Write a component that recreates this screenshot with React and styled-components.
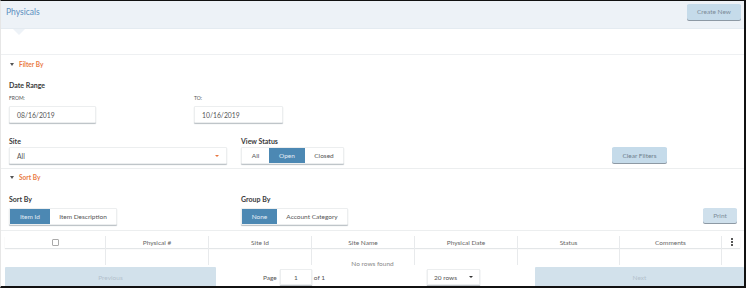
import React from "react";
import styled, { createGlobalStyle } from "styled-components";

const Global = createGlobalStyle`
  html, body { margin: 0; padding: 0; background: #fff; }
  body { font-family: Lato, "Open Sans", sans-serif; color: #333; }
  * { box-sizing: border-box; }
`;

const Frame = styled.div`
  width: 746px;
  height: 288px;
  border-top: 1px solid #111;
  border-right: 2px solid #111;
  border-bottom: 2px solid #111;
  border-left: 1px solid #e6e6e6;
  overflow: hidden;
  display: flex;
  flex-direction: column;
  background: #fff;
`;

const Header = styled.div`
  position: relative;
  height: 28px;
  flex: none;
  background: #edf2f7;
  border-bottom: 1px solid #e4ebf1;
  display: flex;
  align-items: center;
  justify-content: space-between;
  padding: 0 3px 0 5px;
  &::after {
    content: "";
    position: absolute;
    left: 12px;
    top: 28px;
    border-left: 6px solid transparent;
    border-right: 6px solid transparent;
    border-top: 6px solid #edf2f7;
  }
`;

const Title = styled.div`
  font-size: 8.5px;
  color: #5a8fbf;
  margin-top: -6px;
`;

const SoftButton = styled.button`
  font-family: inherit;
  font-size: ${(p) => p.$size || 6.5}px;
  color: ${(p) => p.$fg || "#7d8c99"};
  background: ${(p) => p.$bg || "#c5dbea"};
  border: none;
  border-radius: 2px;
  box-shadow: 0 1px 0 #8d99a4;
  width: ${(p) => p.$w}px;
  height: ${(p) => p.$h || 16}px;
  padding: 0;
  cursor: pointer;
`;

const Gap = styled.div`
  height: 25px;
  flex: none;
`;

const Panel = styled.div`
  border-top: 1px solid #eef0f2;
  display: flex;
  flex-direction: column;
  padding: 0 0 0 8px;
  flex: none;
`;

const Toggle = styled.div`
  display: flex;
  align-items: center;
  gap: 5px;
  height: ${(p) => p.$h || 18}px;
  font-size: 6.5px;
  font-weight: 700;
  color: #ea7a44;
  padding-left: 1px;
  &::before {
    content: "";
    border-left: 2.5px solid transparent;
    border-right: 2.5px solid transparent;
    border-top: 3px solid #555;
  }
`;

const Label = styled.div`
  font-size: 7px;
  font-weight: 700;
  color: #3a3a3a;
  height: 10px;
  line-height: 10px;
  margin-top: ${(p) => p.$mt || 0}px;
`;

const Tiny = styled.div`
  font-size: 5px;
  color: #555;
  height: 8px;
  line-height: 8px;
  margin-top: ${(p) => p.$mt || 0}px;
`;

const Row = styled.div`
  display: flex;
  align-items: ${(p) => p.$align || "flex-start"};
  margin-top: ${(p) => p.$mt || 0}px;
`;

const Col = styled.div`
  display: flex;
  flex-direction: column;
  width: ${(p) => (p.$w ? p.$w + "px" : "auto")};
  flex: none;
`;

const Input = styled.div`
  width: ${(p) => p.$w}px;
  height: 17px;
  margin-top: ${(p) => p.$mt || 0}px;
  background: #fff;
  border: 1px solid #eceeef;
  box-shadow: 0 1px 1px #b9bfc4;
  border-radius: 1px;
  display: flex;
  align-items: center;
  justify-content: space-between;
  padding: 0 7px;
  font-size: 6.8px;
  color: #555;
`;

const Caret = styled.span`
  width: 0;
  height: 0;
  border-left: 2px solid transparent;
  border-right: 2px solid transparent;
  border-top: 2px solid ${(p) => p.$c || "#e9773f"};
`;

const Segs = styled.div`
  display: flex;
  height: 17px;
  margin-top: ${(p) => p.$mt || 0}px;
  border: 1px solid #eceeef;
  box-shadow: 0 1px 1px #b9bfc4;
  border-radius: 1px;
  background: #fff;
  align-self: flex-start;
`;

const Seg = styled.div`
  width: ${(p) => p.$w}px;
  display: flex;
  align-items: center;
  justify-content: center;
  font-size: 6.5px;
  color: ${(p) => (p.$on ? "#e3edf5" : "#555")};
  background: ${(p) => (p.$on ? "#4c88b3" : "#fff")};
`;

const Sep = styled.div`
  height: 1px;
  background: #eceeef;
  margin: ${(p) => p.$m || "0"};
`;

const Table = styled.div`
  margin: 5px 4px 0 4px;
  display: flex;
  flex-direction: column;
  flex: none;
`;

const TRow = styled.div`
  display: grid;
  grid-template-columns: 100px 103px 103px 103px 103px 102px 102px 20px;
  height: ${(p) => p.$h}px;
  box-shadow: ${(p) => (p.$head ? "0 1px 1px #e3e6e8" : "none")};
`;

const Cell = styled.div`
  border-left: 1px solid ${(p) => (p.$first ? "transparent" : "#e8eaec")};
  display: flex;
  align-items: center;
  justify-content: center;
  font-size: 6.5px;
  color: #666;
`;

const Check = styled.span`
  width: 7px;
  height: 7px;
  border: 1px solid #aaa;
  border-radius: 1px;
  background: #fff;
`;

const Kebab = styled.span`
  display: flex;
  flex-direction: column;
  gap: 1px;
  span {
    width: 2px;
    height: 2px;
    background: #222;
    border-radius: 1px;
  }
`;

const Body = styled.div`
  position: relative;
`;

const NoRows = styled.div`
  position: absolute;
  left: 50%;
  top: 12px;
  transform: translateX(-50%);
  background: #fff;
  font-size: 6.5px;
  color: #888;
  padding: 0 14px;
  line-height: 8px;
`;

const Pager = styled.div`
  display: flex;
  align-items: center;
  height: 20px;
  margin: 2px 0 0 4px;
  flex: none;
`;

const PageBtn = styled.div`
  width: ${(p) => p.$w}px;
  height: 20px;
  background: #d2e1eb;
  border-radius: 1px;
  display: flex;
  align-items: center;
  justify-content: center;
  font-size: 6.5px;
  color: #b4c2cd;
`;

const PageInfo = styled.div`
  flex: 1;
  display: flex;
  align-items: center;
  font-size: 6.5px;
  color: #555;
  padding-left: 47px;
`;

const SmallBox = styled.div`
  width: ${(p) => p.$w}px;
  height: 16px;
  border: 1px solid #eceeef;
  box-shadow: 0 1px 1px #c3c8cc;
  display: flex;
  align-items: center;
  justify-content: ${(p) => p.$justify || "center"};
  padding: 0 6px;
  font-size: 6.5px;
  color: #555;
  margin: ${(p) => p.$m || "0"};
`;

export default function App() {
  const cols = ["Physical #", "Site Id", "Site Name", "Physical Date", "Status", "Comments"];
  return (
    <>
      <Global />
      <Frame>
        <Header>
          <Title>Physicals</Title>
          <SoftButton $w={54} $h={16} style={{ marginTop: -6 }}>Create New</SoftButton>
        </Header>
        <Gap />
        <Panel>
          <Toggle>Filter By</Toggle>
          <Label $mt={7}>Date Range</Label>
          <Row>
            <Col $w={185}>
              <Tiny $mt={4}>FROM:</Tiny>
              <Input $w={87} $mt={4}>08/16/2019</Input>
            </Col>
            <Col>
              <Tiny $mt={4}>TO:</Tiny>
              <Input $w={89} $mt={4}>10/16/2019</Input>
            </Col>
          </Row>
          <Row $align="flex-end" $mt={13}>
            <Col $w={232}>
              <Label>Site</Label>
              <Input $w={218} $mt={1}>
                <span>All</span>
                <Caret />
              </Input>
            </Col>
            <Col $w={371}>
              <Label>View Status</Label>
              <Segs $mt={1}>
                <Seg $w={27}>All</Seg>
                <Seg $w={36} $on>Open</Seg>
                <Seg $w={38}>Closed</Seg>
              </Segs>
            </Col>
            <SoftButton $w={55} $h={16} $fg="#6f7f8d" style={{ marginBottom: 1 }}>Clear Filters</SoftButton>
          </Row>
          <Sep $m="4px 0 0 -8px" />
          <Toggle $h={16}>Sort By</Toggle>
          <Row $align="flex-end" $mt={9}>
            <Col $w={232}>
              <Label>Sort By</Label>
              <Segs $mt={4}>
                <Seg $w={40} $on>Item Id</Seg>
                <Seg $w={66}>Item Description</Seg>
              </Segs>
            </Col>
            <Col $w={462}>
              <Label>Group By</Label>
              <Segs $mt={4}>
                <Seg $w={35} $on>None</Seg>
                <Seg $w={70}>Account Category</Seg>
              </Segs>
            </Col>
            <SoftButton $w={34} $h={15} $bg="#cfe0ec" $fg="#7d8e9b" style={{ marginBottom: 2 }}>Print</SoftButton>
          </Row>
          <Sep $m="5px 0 0 -8px" />
        </Panel>
        <Table>
          <TRow $h={12} $head>
            <Cell $first><Check /></Cell>
            {cols.map((c) => (
              <Cell key={c}>{c}</Cell>
            ))}
            <Cell>
              <Kebab><span /><span /><span /></Kebab>
            </Cell>
          </TRow>
          <Body>
            <TRow $h={17}>
              <Cell $first />
              {cols.map((c) => (
                <Cell key={c} />
              ))}
              <Cell />
            </TRow>
            <NoRows>No rows found</NoRows>
          </Body>
        </Table>
        <Pager>
          <PageBtn $w={211}>Previous</PageBtn>
          <PageInfo>
            <span>Page</span>
            <SmallBox $w={32} $m="0 2px 0 3px">1</SmallBox>
            <span>of 1</span>
            <SmallBox $w={53} $justify="space-between" $m="0 0 0 102px">
              <span>20 rows</span>
              <Caret $c="#333" />
            </SmallBox>
          </PageInfo>
          <PageBtn $w={209}>Next</PageBtn>
        </Pager>
      </Frame>
    </>
  );
}
